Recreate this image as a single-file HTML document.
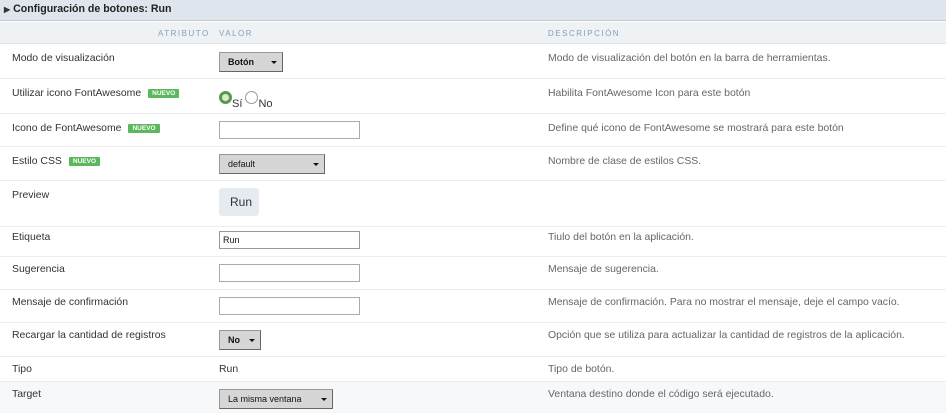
<!DOCTYPE html>
<html><head><meta charset="utf-8"><style>
*{margin:0;padding:0;box-sizing:border-box}
body{width:946px;height:413px;overflow:hidden;background:#fff;font-family:"Liberation Sans",sans-serif;font-size:10.45px;color:#333;position:relative}
.top{position:absolute;left:0;top:0;width:946px;height:21px;background:#dfe5ec;border-bottom:1px solid #c4c8cc;font-weight:bold;font-size:10.6px;color:#222;padding:3px 0 0 4px}
.top span{font-size:8px;color:#333;margin-right:3px}
.th{position:absolute;left:0;top:22px;width:946px;height:22px;background:#eef2f5;border-bottom:1px solid #dde5ec;font-size:8px;letter-spacing:1.5px;color:#8aa0b0;}
.th div{position:absolute;top:7px}
.row{position:absolute;left:0;width:946px;border-bottom:1px solid #ebedef}
.l{position:absolute;left:12px;top:9px}
.v{position:absolute;left:219px}
.d{position:absolute;left:548px;top:9px;color:#666}
.b{display:inline-block;background:#5cb85c;color:#fff;font-size:6.5px;font-weight:bold;padding:1px 4px;margin-left:7px;vertical-align:1px;border-radius:1px}
.sel{position:absolute;height:20px;background:#d6d6d6;border:1px solid #999;border-right-color:#666;border-bottom-color:#666;font-size:9px;font-weight:bold;padding:4px 0 0 8px;color:#111}
.sel:after{content:"";position:absolute;right:5px;top:8px;border-left:3px solid transparent;border-right:3px solid transparent;border-top:3px solid #111}
.inp{position:absolute;width:141px;height:18px;border:1px solid #aaa;background:#fff;font-size:9px;padding:3px 0 0 3px;color:#111}
</style></head><body>
<div class="top"><span>▶</span>Configuración de botones: Run</div>
<div class="th"><div style="left:158px">ATRIBUTO</div><div style="left:219px">VALOR</div><div style="left:548px">DESCRIPCIÓN</div></div>

<div class="row" style="top:44px;height:35px"><div class="l">Modo de visualización</div><div class="sel" style="left:219px;top:8px;width:64px">Botón</div><div class="d">Modo de visualización del botón en la barra de herramientas.</div></div>

<div class="row" style="top:79px;height:35px"><div class="l">Utilizar icono FontAwesome<span class="b">NUEVO</span></div>
<div class="v" style="top:12px;font-size:11px"><span style="display:inline-block;width:13px;height:13px;border-radius:50%;border:3px solid #5a9a4a;background:#dfe8d0;vertical-align:-1px"></span><span style="vertical-align:-4px">Sí</span> <span style="display:inline-block;width:13px;height:13px;border-radius:50%;border:1px solid #999;background:#fff;vertical-align:-1px"></span><span style="vertical-align:-4px">No</span></div>
<div class="d">Habilita FontAwesome Icon para este botón</div></div>

<div class="row" style="top:114px;height:33px"><div class="l">Icono de FontAwesome<span class="b">NUEVO</span></div><div class="inp" style="left:219px;top:7px"></div><div class="d">Define qué icono de FontAwesome se mostrará para este botón</div></div>

<div class="row" style="top:147px;height:34px"><div class="l">Estilo CSS<span class="b">NUEVO</span></div><div class="sel" style="left:219px;top:7px;width:106px;font-weight:normal">default</div><div class="d">Nombre de clase de estilos CSS.</div></div>

<div class="row" style="top:181px;height:46px"><div class="l">Preview</div><div style="position:absolute;left:219px;top:7px;width:40px;height:28px;background:#e5ebf1;border-radius:3px;font-size:12px;padding:7px 0 0 11px">Run</div></div>

<div class="row" style="top:227px;height:30px"><div class="l" style="top:5px">Etiqueta</div><div class="inp" style="left:219px;top:4px;border-color:#999">Run</div><div class="d" style="top:5px">Tiulo del botón en la aplicación.</div></div>

<div class="row" style="top:257px;height:33px"><div class="l" style="top:7px">Sugerencia</div><div class="inp" style="left:219px;top:7px"></div><div class="d" style="top:7px">Mensaje de sugerencia.</div></div>

<div class="row" style="top:290px;height:33px"><div class="l" style="top:7px">Mensaje de confirmación</div><div class="inp" style="left:219px;top:7px"></div><div class="d" style="top:7px">Mensaje de confirmación. Para no mostrar el mensaje, deje el campo vacío.</div></div>

<div class="row" style="top:323px;height:34px"><div class="l" style="top:7px">Recargar la cantidad de registros</div><div class="sel" style="left:219px;top:7px;width:42px">No</div><div class="d" style="top:7px">Opción que se utiliza para actualizar la cantidad de registros de la aplicación.</div></div>

<div class="row" style="top:357px;height:25px"><div class="l" style="top:7px">Tipo</div><div class="v" style="top:7px">Run</div><div class="d" style="top:7px">Tipo de botón.</div></div>

<div class="row" style="top:382px;height:31px;background:#f7f8fa;border:none"><div class="l" style="top:7px">Target</div><div class="sel" style="left:219px;top:7px;width:114px;font-weight:normal">La misma ventana</div><div class="d" style="top:7px">Ventana destino donde el código será ejecutado.</div></div>
</body></html>
